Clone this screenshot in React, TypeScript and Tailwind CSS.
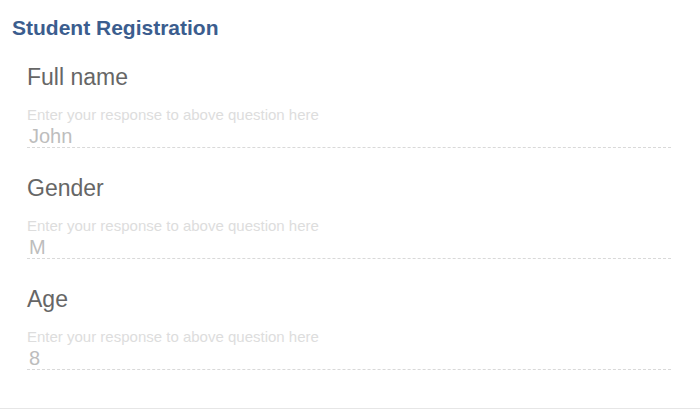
import React from "react";

const fields = [
  { label: "Full name", value: "John" },
  { label: "Gender", value: "M" },
  { label: "Age", value: "8" },
];

export default function App() {
  return (
    <div
      className="w-[700px] h-[409px] bg-white border-b border-[#e6e6e6] overflow-hidden"
      style={{ fontFamily: '"Liberation Sans", Arial, Helvetica, sans-serif' }}
    >
      <h1 className="pt-[16px] pl-[12px] text-[21px] leading-[24px] font-bold text-[#3b5d8e]">
        Student Registration
      </h1>
      <div className="flex flex-col gap-[26px] mt-[23px] ml-[27px] w-[644px]">
        {fields.map((f) => (
          <div key={f.label} className="flex flex-col">
            <div className="text-[23px] leading-[28px] text-[#666666]">{f.label}</div>
            <div className="mt-[15px] text-[15px] leading-[18px] text-[#dddddd]">
              Enter your response to above question here
            </div>
            <div className="mt-[1px] pl-[2px] text-[20px] leading-[22px] text-[#bdbdbd] border-b border-dashed border-[#d9d9d9]">
              {f.value}
            </div>
          </div>
        ))}
      </div>
    </div>
  );
}
